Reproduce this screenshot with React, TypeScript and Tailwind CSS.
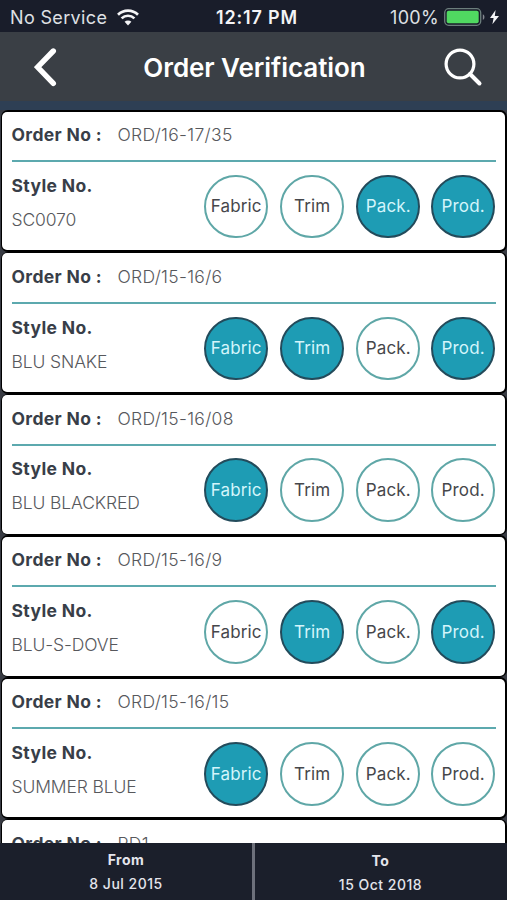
import React from "react";

interface Stage {
  label: string;
  done: boolean;
}

interface Order {
  orderNo: string;
  styleNo: string;
  stages: Stage[];
}

const makeStages = (
  fabric: boolean,
  trim: boolean,
  pack: boolean,
  prod: boolean
): Stage[] => [
  { label: "Fabric", done: fabric },
  { label: "Trim", done: trim },
  { label: "Pack.", done: pack },
  { label: "Prod.", done: prod },
];

const orders: Order[] = [
  { orderNo: "ORD/16-17/35", styleNo: "SC0070", stages: makeStages(false, false, true, true) },
  { orderNo: "ORD/15-16/6", styleNo: "BLU SNAKE", stages: makeStages(true, true, false, true) },
  { orderNo: "ORD/15-16/08", styleNo: "BLU BLACKRED", stages: makeStages(true, false, false, false) },
  { orderNo: "ORD/15-16/9", styleNo: "BLU-S-DOVE", stages: makeStages(false, true, false, true) },
  { orderNo: "ORD/15-16/15", styleNo: "SUMMER BLUE", stages: makeStages(true, false, false, false) },
  { orderNo: "PD1", styleNo: "", stages: [] },
];

const StatusBar: React.FC = () => (
  <div className="grid h-8 shrink-0 grid-cols-[1fr_auto_1fr] items-center bg-[#191d2a] pl-[10px] pr-[7px] pt-[2px] text-[18px] text-[#dfe0e4]">
    <div className="flex items-center gap-[10px]">
      <span className="tracking-[0.35px]">No Service</span>
      <svg width="22" height="17" viewBox="0 0 22 17" fill="none" stroke="#f4f4f6" strokeWidth="2.7">
        <path d="M1 5.7a14.2 14.2 0 0 1 20 0" />
        <path d="M4.6 9.4a9.1 9.1 0 0 1 12.8 0" />
        <path d="M11 16.4 7.6 12.8a4.8 4.8 0 0 1 6.8 0z" fill="#f4f4f6" stroke="none" />
      </svg>
    </div>
    <span className="pl-[4px] text-[18px] font-semibold tracking-[0.85px] text-[#f4f4f6]">12:17 PM</span>
    <div className="flex items-center justify-end">
      <span className="text-[18px] tracking-[0.3px]">100%</span>
      <svg className="ml-[5px]" width="56" height="18" viewBox="0 0 56 18" fill="none">
        <rect x="0.7" y="0.7" width="36" height="16.6" rx="4" stroke="#6c7e7c" strokeWidth="1.3" />
        <rect x="2.7" y="2.7" width="32" height="12.6" rx="2" fill="#50d961" />
        <path d="M38.8 6.2c2.2.8 2.2 4.8 0 5.6z" fill="#858890" />
        <path d="M51.6 2 46 10h3.6l-1.2 6.2L55 8h-4.2z" fill="#f4f4f6" />
      </svg>
    </div>
  </div>
);

const Header: React.FC = () => (
  <header className="flex h-[69px] shrink-0 items-center justify-between bg-[#3a3f45] pl-[34px] pr-[24px]">
    <button className="w-[24px]" aria-label="Back">
      <svg width="24" height="40" viewBox="0 0 24 40" fill="none" stroke="#fff" strokeWidth="5.4" strokeLinecap="round">
        <path d="M19.3 4 3.6 20.2 19.3 36.4" strokeLinejoin="miter" />
      </svg>
    </button>
    <h1 className="pl-[8px] pt-px text-[26px] font-semibold tracking-[-0.06px] text-white">
      Order Verification
    </h1>
    <button aria-label="Search">
      <svg width="40" height="40" viewBox="0 0 40 40" fill="none" stroke="#fff" strokeLinecap="round">
        <circle cx="17" cy="17" r="13.9" strokeWidth="3.2" />
        <path d="m27 27 9.5 9.5" strokeWidth="4" />
      </svg>
    </button>
  </header>
);

const StageBadge: React.FC<{ stage: Stage }> = ({ stage }) => (
  <div
    className={`flex size-[63.6px] items-center justify-center rounded-full border-2 pt-px text-[17px] tracking-[0.15px] last:-ml-px ${
      stage.done
        ? "border-[#234b5b] bg-[#1e9cb4] text-[#d4f5fb]"
        : "border-[#5fa7a7] bg-white text-[#46474b]"
    }`}
  >
    {stage.label}
  </div>
);

const OrderCard: React.FC<{ order: Order }> = ({ order }) => (
  <div className="h-[141.8px] shrink-0 rounded-[7px] bg-black p-[1.5px]">
    <div className="h-full rounded-[5px] bg-white px-[9.5px]">
      <div className="flex h-[50.5px] items-center border-b-2 border-[#5ca9ae] pb-[1.4px] text-[17.5px]">
        <span className="w-[106px] font-bold tracking-[0.35px] text-[#383e48]">Order No :</span>
        <span className="font-light tracking-[0.3px] text-[#57585c]">{order.orderNo}</span>
      </div>
      <div className="flex justify-between">
        <div className="pt-[10.8px] text-[17.5px] leading-[26px]">
          <p className="font-bold tracking-[0.35px] text-[#383e48]">Style No.</p>
          <p className="mt-2 font-light tracking-[-0.12px] text-[#57585c]">{order.styleNo}</p>
        </div>
        <div className="flex gap-[12.4px] pr-[0.5px] pt-[12.8px]">
          {order.stages.map((stage) => (
            <StageBadge key={stage.label} stage={stage} />
          ))}
        </div>
      </div>
    </div>
  </div>
);

const App: React.FC = () => {
  return (
    <div className="flex h-[900px] w-[507px] flex-col overflow-hidden bg-[#383b43] font-['Inter','Liberation_Sans',sans-serif]">
      <StatusBar />
      <Header />
      <div className="h-[9px] shrink-0 bg-[#2e3f54]" />

      <main className="flex min-h-0 flex-1 flex-col overflow-hidden px-[0.5px]">
        {orders.map((order) => (
          <OrderCard key={order.orderNo} order={order} />
        ))}
      </main>

      {/* date range */}
      <footer className="grid h-[57px] shrink-0 grid-cols-[255px_1fr] bg-[#1b1f2b] text-center text-[14px] leading-[18px] tracking-[0.5px] text-[#e4e5ec]">
        <div className="border-r-3 border-[#6d707b] pt-2">
          <p className="font-bold">From</p>
          <p className="mt-[6px] font-medium">8 Jul 2015</p>
        </div>
        <div className="pr-px pt-[9px]">
          <p className="font-bold">To</p>
          <p className="mt-[6px] font-medium">15 Oct 2018</p>
        </div>
      </footer>
    </div>
  );
};

export default App;
